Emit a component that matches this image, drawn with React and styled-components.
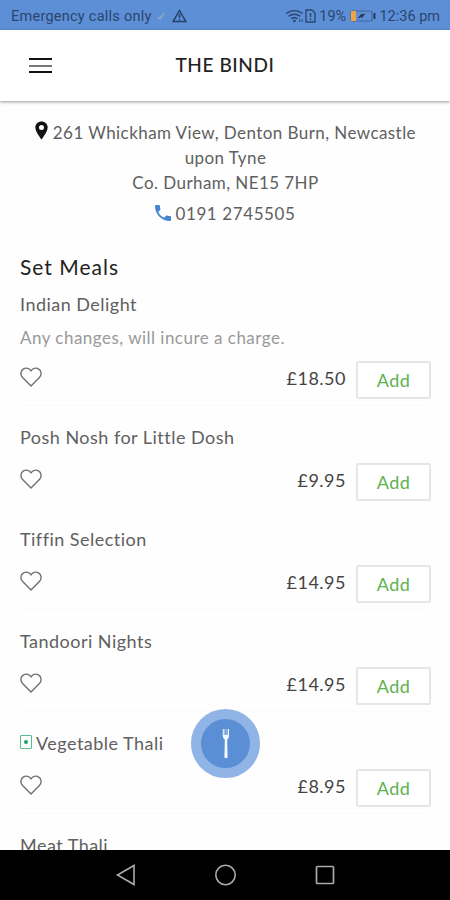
import styled, { createGlobalStyle } from "styled-components";

const GlobalStyle = createGlobalStyle`
  * {
    box-sizing: border-box;
  }
  body {
    margin: 0;
    background-color: #fff;
  }
`;
const Container = styled.div`
  position: relative;
  display: flex;
  flex-direction: column;
  width: 450px;
  height: 900px;
  overflow: hidden;
  background-color: #fefefe;
  font-family: "Lato", "Liberation Sans", sans-serif;
  color: #606060;
`;
const StatusBar = styled.div`
  display: flex;
  align-items: center;
  justify-content: space-between;
  flex-shrink: 0;
  height: 30px;
  padding: 2px 10px 0 11px;
  background-color: #5c8fd6;
  color: #2b456d;
  font-family: "Roboto", sans-serif;
  font-size: 14.5px;
`;
const StatusGroup = styled.div`
  display: flex;
  align-items: center;
  white-space: nowrap;
`;
const StatusText = styled.span`
  letter-spacing: ${(props) => props.$spacing || "0"};
`;
const Header = styled.div`
  position: relative;
  display: flex;
  align-items: center;
  justify-content: center;
  flex-shrink: 0;
  height: 71px;
  background-color: #fff;
  box-shadow: 0 1px 3px rgba(0, 0, 0, 0.4);
`;
const MenuButton = styled.div`
  position: absolute;
  left: 29px;
  top: 28px;
  display: flex;
  flex-direction: column;
  gap: 4px;
`;
const MenuLine = styled.span`
  width: 23px;
  height: 2px;
  margin-bottom: 0.5px;
  background-color: ${(props) => props.$color || "#111"};
`;
const Title = styled.h1`
  margin: 0;
  padding-bottom: 2px;
  font-size: 19px;
  font-weight: 500;
  letter-spacing: 0.6px;
  color: #222;
`;
const Content = styled.div`
  flex: 1;
  min-height: 0;
  overflow: hidden;
  padding: 19px 19px 0 20px;
`;
const Address = styled.div`
  text-align: center;
  font-size: 17px;
  line-height: 25px;
  letter-spacing: 0.43px;
  white-space: nowrap;

  svg {
    vertical-align: -1px;
  }
`;
const Phone = styled.div`
  display: flex;
  align-items: center;
  justify-content: center;
  gap: 4px;
  margin-top: 6px;
  font-size: 17px;
  line-height: 25px;
  letter-spacing: 0.6px;

  svg {
    margin-top: -2px;
  }
`;
const SectionTitle = styled.h2`
  margin: 28px 0 -7px;
  font-size: 21px;
  font-weight: 400;
  line-height: 26px;
  letter-spacing: 1px;
  color: #222;
`;
const Item = styled.div`
  padding-top: 19px;
  border-bottom: 1px solid #fafafa;
`;
const ItemName = styled.div`
  display: flex;
  align-items: center;
  gap: 4px;
  height: 24px;
  font-size: 18px;
  letter-spacing: 0.48px;
`;
const Desc = styled.div`
  height: 31px;
  padding-top: 11px;
  font-size: 17px;
  line-height: 21px;
  letter-spacing: 0.48px;
  color: #999;
`;
const ItemFooter = styled.div`
  display: flex;
  align-items: center;
  height: 58px;
  padding-top: 7px;

  svg {
    margin-bottom: 5px;
  }
`;
const Price = styled.span`
  margin: 0 10px 3px auto;
  font-size: 18px;
  letter-spacing: 0.5px;
  color: #444;
`;
const AddButton = styled.button`
  width: 75px;
  height: 38px;
  padding: 0;
  border: 2px solid #e6e6e6;
  border-radius: 2px;
  background-color: #fff;
  font-family: inherit;
  font-size: 18px;
  letter-spacing: 0.5px;
  color: #60b24f;
`;
const VegMark = styled.span`
  display: flex;
  align-items: center;
  justify-content: center;
  width: 12px;
  height: 14px;
  margin-top: -2px;
  border: 1px solid #55bd8d;
  border-radius: 1px;

  &::after {
    content: "";
    width: 4px;
    height: 4px;
    border-radius: 50%;
    background-color: #1ba363;
  }
`;
const MenuFab = styled.div`
  position: absolute;
  left: 191px;
  top: 709px;
  display: flex;
  align-items: center;
  justify-content: center;
  width: 69px;
  height: 69px;
  border: 10px solid #91b4e6;
  border-radius: 50%;
  background-color: #5b8fd5;
`;
const NavBar = styled.div`
  display: flex;
  align-items: center;
  justify-content: center;
  gap: 76px;
  flex-shrink: 0;
  height: 50px;
  background-color: #000;
`;

const meals = [
  {
    name: "Indian Delight",
    desc: "Any changes, will incure a charge.",
    price: "£18.50",
  },
  { name: "Posh Nosh for Little Dosh", price: "£9.95" },
  { name: "Tiffin Selection", price: "£14.95" },
  { name: "Tandoori Nights", price: "£14.95" },
  { name: "Vegetable Thali", price: "£8.95", veg: true },
  { name: "Meat Thali" },
];

const WarningIcon = () => (
  <svg width="15" height="14" viewBox="0 0 15 14" fill="none" stroke="#263f68">
    <path d="M7.5 1.5 L13.8 12.5 H1.2 Z" strokeWidth="1.5" />
    <path d="M7.5 5 V9 M7.5 10 V11.3" strokeWidth="1.5" />
  </svg>
);

const WifiIcon = () => (
  <svg width="20" height="14" viewBox="0 0 17 14" preserveAspectRatio="none" fill="none" stroke="#2b456d">
    <path d="M1 4.5 Q8 -1.2 15 4.5" strokeWidth="1.4" />
    <path d="M3 7.2 Q8 3.2 13 7.2" strokeWidth="1.4" />
    <path d="M5.3 9.8 Q8 7.6 10.7 9.8" strokeWidth="1.4" />
    <circle cx="8" cy="12" r="1.2" fill="#2b456d" stroke="none" />
    <path d="M12.5 10 V13 M14.5 10 V13" strokeWidth="0.8" />
  </svg>
);

const SimIcon = () => (
  <svg width="11" height="14" viewBox="0 0 11 14" fill="none" stroke="#2b456d">
    <path d="M1 1 H7 L10 4 V13 H1 Z" strokeWidth="1.3" />
    <path d="M5.5 4 V8 M5.5 9.5 V11" strokeWidth="1.5" />
  </svg>
);

const BatteryIcon = () => (
  <svg width="26" height="12" viewBox="0 0 26 12">
    <rect x="1" y="1" width="21" height="10" rx="1" fill="none" stroke="#45679c" strokeWidth="1.2" />
    <rect x="1" y="1" width="5" height="10" fill="#f0a445" />
    <path d="M8.5 8 L11.5 4 L12 5 L14.5 4 L12 7.5 L11.3 6.6 Z" fill="#263b5e" stroke="#263b5e" />
    <path d="M24.5 3 V9" stroke="#263b5e" strokeWidth="2" />
  </svg>
);

const PinIcon = () => (
  <svg width="13" height="19" viewBox="0 0 13 19">
    <path
      d="M6.5 0.5 C3 0.5 0.3 3.1 0.3 6.5 C0.3 10.7 6.5 18.5 6.5 18.5 S12.7 10.7 12.7 6.5 C12.7 3.1 10 0.5 6.5 0.5 Z M6.5 4 A2.5 2.5 0 1 1 6.5 9 A2.5 2.5 0 1 1 6.5 4 Z"
      fill="#111"
      fillRule="evenodd"
    />
  </svg>
);

const PhoneIcon = () => (
  <svg width="16" height="16" viewBox="3 3 18 18">
    <path
      d="M6.62 10.79c1.44 2.83 3.76 5.14 6.59 6.59l2.2-2.2c.27-.27.67-.36 1.02-.24 1.12.37 2.33.57 3.57.57.55 0 1 .45 1 1V20c0 .55-.45 1-1 1-9.39 0-17-7.61-17-17 0-.55.45-1 1-1h3.5c.55 0 1 .45 1 1 0 1.25.2 2.45.57 3.57.11.35.03.74-.25 1.02l-2.2 2.2z"
      fill="#4585cf"
    />
  </svg>
);

const HeartIcon = () => (
  <svg width="22" height="20" viewBox="0 0 22 20">
    <path
      d="M11 19 L2.6 10.6 C-0.1 7.8 0.6 3.4 3.5 1.8 C6.2 0.3 9.5 1.3 11 4 C12.5 1.3 15.8 0.3 18.5 1.8 C21.4 3.4 22.1 7.8 19.4 10.6 Z"
      fill="none"
      stroke="#707070"
      strokeWidth="1.4"
      strokeLinejoin="round"
    />
  </svg>
);

const ForkIcon = () => (
  <svg width="8" height="31" viewBox="0 0 10 31" preserveAspectRatio="none">
    <path
      d="M1 1 H2.3 V7 H3.2 V1 H4 V7 H5.8 V1 H6.6 V7 H7.5 V1 H8.8 V8 Q8.8 10.8 6.5 11.6 V13 L7 29.5 Q5 31 3 29.5 L3.5 13 V11.6 Q1 10.8 1 8 Z"
      fill="#f4f8ff"
    />
  </svg>
);

const MealItem = ({ meal }) => (
  <Item>
    <ItemName>
      {meal.veg && <VegMark />}
      {meal.name}
    </ItemName>
    {meal.desc && <Desc>{meal.desc}</Desc>}
    {meal.price && (
      <ItemFooter>
        <HeartIcon />
        <Price>{meal.price}</Price>
        <AddButton>Add</AddButton>
      </ItemFooter>
    )}
  </Item>
);

const App = () => {
  return (
    <Container>
      <GlobalStyle />
      <StatusBar>
        <StatusGroup>
          <StatusText $spacing="0.25px">Emergency calls only</StatusText>
          <svg width="20" height="12" viewBox="0 0 20 12">
            <path d="M6 7 L8 9 L12 3" fill="none" stroke="#8fa6c6" strokeWidth="1.6" />
          </svg>
          <WarningIcon />
        </StatusGroup>
        <StatusGroup>
          <WifiIcon />
          <SimIcon />
          <StatusText>&nbsp;19%&nbsp;</StatusText>
          <BatteryIcon />
          <StatusText>&nbsp;12:36 pm</StatusText>
        </StatusGroup>
      </StatusBar>
      <Header>
        <MenuButton>
          <MenuLine />
          <MenuLine $color="#777" />
          <MenuLine />
        </MenuButton>
        <Title>THE BINDI</Title>
      </Header>
      <Content>
        <Address>
          <PinIcon /> 261 Whickham View, Denton Burn, Newcastle
          <br />
          upon Tyne
          <br />
          Co. Durham, NE15 7HP
        </Address>
        <Phone>
          <PhoneIcon />
          0191 2745505
        </Phone>
        <SectionTitle>Set Meals</SectionTitle>
        {meals.map((meal) => (
          <MealItem key={meal.name} meal={meal} />
        ))}
      </Content>
      <MenuFab>
        <ForkIcon />
      </MenuFab>
      <NavBar>
        <svg width="22" height="22" viewBox="0 0 22 22">
          <path d="M19 1.5 V20.5 L2.5 11 Z" fill="none" stroke="#aaa" strokeWidth="1.6" />
        </svg>
        <svg width="24" height="24" viewBox="0 0 24 24">
          <circle cx="12.5" cy="12" r="9.7" fill="none" stroke="#aaa" strokeWidth="1.6" />
        </svg>
        <svg width="22" height="22" viewBox="0 0 22 22">
          <rect x="3.5" y="2.5" width="17" height="17" rx="1" fill="none" stroke="#aaa" strokeWidth="1.7" />
        </svg>
      </NavBar>
    </Container>
  );
};

export default App;
